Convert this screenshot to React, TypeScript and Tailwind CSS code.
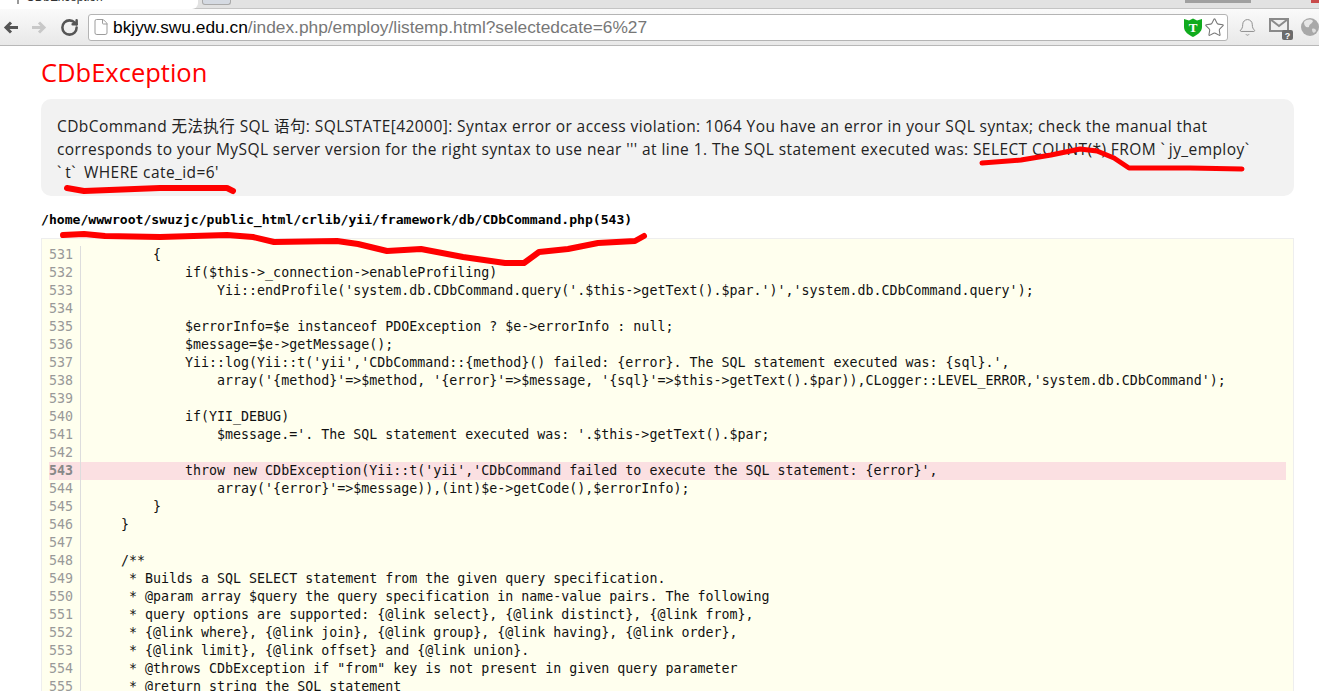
import { Bell, RotateCw, Star, File } from "lucide-react";

const codeLines = [
  [531, "        {"],
  [532, "            if($this->_connection->enableProfiling)"],
  [533, "                Yii::endProfile('system.db.CDbCommand.query('.$this->getText().$par.')','system.db.CDbCommand.query');"],
  [534, ""],
  [535, "            $errorInfo=$e instanceof PDOException ? $e->errorInfo : null;"],
  [536, "            $message=$e->getMessage();"],
  [537, "            Yii::log(Yii::t('yii','CDbCommand::{method}() failed: {error}. The SQL statement executed was: {sql}.',"],
  [538, "                array('{method}'=>$method, '{error}'=>$message, '{sql}'=>$this->getText().$par)),CLogger::LEVEL_ERROR,'system.db.CDbCommand');"],
  [539, ""],
  [540, "            if(YII_DEBUG)"],
  [541, "                $message.='. The SQL statement executed was: '.$this->getText().$par;"],
  [542, ""],
  [543, "            throw new CDbException(Yii::t('yii','CDbCommand failed to execute the SQL statement: {error}',"],
  [544, "                array('{error}'=>$message)),(int)$e->getCode(),$errorInfo);"],
  [545, "        }"],
  [546, "    }"],
  [547, ""],
  [548, "    /**"],
  [549, "     * Builds a SQL SELECT statement from the given query specification."],
  [550, "     * @param array $query the query specification in name-value pairs. The following"],
  [551, "     * query options are supported: {@link select}, {@link distinct}, {@link from},"],
  [552, "     * {@link where}, {@link join}, {@link group}, {@link having}, {@link order},"],
  [553, "     * {@link limit}, {@link offset} and {@link union}."],
  [554, "     * @throws CDbException if \"from\" key is not present in given query parameter"],
  [555, "     * @return string the SQL statement"],
] as const;

// red marker strokes drawn over the page
function Scribbles() {
  return (
    <svg className="absolute left-0 top-0 pointer-events-none" width="1319" height="691" fill="none" stroke="#ff0000" strokeWidth="5" strokeLinecap="round" strokeLinejoin="round">
      <path d="M982 163 L1021 160 L1051 155 L1080 149 L1097 151 L1114 158 L1129 168 L1190 168 L1242 169" />
      <path d="M67 188 L84 191 L160 188 L227 188 L233 191" strokeWidth="6" />
      <path d="M63 235 L84 234 L105 236 L160 237 L227 235 L253 237 L274 242 L337 241 L358 244 L387 251 L421 249 L463 257 L505 263 L524 263 L539 252 L568 249 L598 243 L635 241 L644 236" strokeWidth="6" />
    </svg>
  );
}

function NavArrow({ color, flip }: { color: string; flip?: boolean }) {
  return (
    <svg width="15" height="15" viewBox="0 0 15 15" fill="none" stroke={color} strokeWidth="3" className={flip ? "-scale-x-100" : ""}>
      <path d="M15 7.5H3 M8 2.5L3 7.5L8 12.5" />
    </svg>
  );
}

function Shield() {
  return (
    <svg width="18" height="19" viewBox="0 0 18 19">
      <path d="M0 1 L5 2.5 L9 0.5 L13 2.5 L18 1 V9 C18 14 13 17 9 19 C5 17 0 14 0 9 Z" fill="#10ab1e" />
      <text x="9" y="14" textAnchor="middle" fontSize="13" fontWeight="700" fill="#ffffff" fontFamily="'Liberation Serif', serif">T</text>
    </svg>
  );
}

function MailIcon() {
  return (
    <svg width="24" height="22" viewBox="0 0 24 22">
      <rect x="0" y="0" width="20" height="14" fill="#8a8a8a" />
      <path d="M2 2 H18 V12 H2 Z" fill="#efefef" />
      <path d="M1 1 L10 8 L19 1" fill="none" stroke="#8a8a8a" strokeWidth="2" />
      <rect x="13" y="12" width="11" height="10" rx="2" fill="#6b6b6b" />
      <text x="18.5" y="20.5" textAnchor="middle" fontSize="9" fontWeight="700" fill="#ffffff" fontFamily="'Liberation Sans', sans-serif">?</text>
    </svg>
  );
}

function Globe() {
  return (
    <svg width="18" height="18" viewBox="0 0 18 18" className="shrink-0">
      <circle cx="9" cy="9" r="9" fill="#a8a8a8" />
      <path d="M3 4 C6 1 10 1 12 3 C11 6 8 6 8 9 C5 10 3 8 3 4 Z" fill="#e6e6e6" />
      <path d="M11 11 C13 10 15 11 15 13 C13 16 11 15 11 11 Z" fill="#dddddd" />
    </svg>
  );
}

export default function App() {
  return (
    <div className="relative h-[691px] w-[1319px] overflow-hidden bg-white font-['Open_Sans','Noto_Sans_CJK_SC',sans-serif]">
      <header className="h-[46px] border-b border-[#b8b8b8]">
        <div className="flex h-[9px] bg-[#e2e2e2] border-b border-[#c4c4c4]">
          <div className="h-[9px] w-[198px] overflow-hidden rounded-br-[6px] bg-white">
            <div className="-mt-[10px] flex items-center pl-[17px] text-[12px] leading-[14px] text-[#333]">
              <div className="h-[14px] w-[10px] border border-[#999]" />
              <span className="ml-[7px] font-['Liberation_Sans',sans-serif]">CDbException</span>
              <span className="ml-[95px] text-[#666]">×</span>
            </div>
          </div>
          <div className="ml-[4px] h-[5px] w-[29px] rounded-b-[3px] border border-t-0 border-[#aaa] bg-[#d5dae2]" />
          <div className="ml-auto h-[3px] w-[66px] bg-[#a0a0a0]" />
          <div className="ml-[60px] h-[3px] w-[8px] bg-[#c84a4a]" />
        </div>
        <div className="flex h-[36px] items-center bg-gradient-to-b from-[#fafafa] to-[#e8e8e8] pl-[3px]">
          <NavArrow color="#555555" />
          <div className="ml-[14px]"><NavArrow color="#c8c8c8" flip /></div>
          <RotateCw className="ml-[13px] h-[19px] w-[19px] text-[#555]" strokeWidth={3.2} />
          <div className="ml-[9px] flex h-[27px] w-[1140px] items-center rounded-[3px] border border-[#b4b4b4] bg-white pl-[3px] pr-[2px]">
            <File className="h-[18px] w-[18px] text-[#999]" strokeWidth={1.3} />
            <span className="ml-[3px] font-['Liberation_Sans',sans-serif] text-[17.34px] text-black">
              bkjyw.swu.edu.cn<span className="text-[#777]">/index.php/employ/listemp.html?selectedcate=6%27</span>
            </span>
            <div className="ml-auto flex items-center gap-[2px]">
              <Shield />
              <Star className="h-[21px] w-[21px] text-[#777]" strokeWidth={1.2} />
            </div>
          </div>
          <Bell className="ml-[10px] h-[19px] w-[19px] text-[#8a8a8a]" strokeWidth={1.2} />
          <div className="ml-[12px] mt-[3px]"><MailIcon /></div>
          <div className="ml-[8px]"><Globe /></div>
        </div>
      </header>

      <main className="pl-[41px] pr-[25px]">
        <h1 className="pt-[10px] text-[25.5px] leading-[33px] text-[#ff0000]">CDbException</h1>

        <div className="mt-[10px] h-[97px] rounded-[10px] bg-[#f2f2f2] px-[16px] py-[16px] text-[15.5px] leading-[23px] tracking-[0.42px] text-[#222]">
          CDbCommand 无法执行 SQL 语句: SQLSTATE[42000]: Syntax error or access violation: 1064 You have an error in your SQL syntax; check the manual that corresponds to your MySQL server version for the right syntax to use near ''' at line 1. The SQL statement executed was: SELECT COUNT(*) FROM <span className="tracking-[4px]">`</span>jy_employ<span className="tracking-[4px]">`</span>
          <br />
          <span className="tracking-[4px]">`</span>t<span className="tracking-[4px]">`</span> WHERE cate_id=6'
        </div>

        <p className="mt-[15px] font-['DejaVu_Sans_Mono',monospace] text-[13.1px] font-bold leading-[18px] text-black">
          /home/wwwroot/swuzjc/public_html/crlib/yii/framework/db/CDbCommand.php(543)
        </p>

        <div className="mt-[9px] border border-[#eeeeee] bg-[#ffffee] py-[7px] pl-[7px] pr-[7px] font-['DejaVu_Sans_Mono',monospace] text-[13.3px] leading-[18px] text-[#111]">
          {codeLines.map(([num, text]) => (
            <div key={num} className={num === 543 ? "flex h-[18px] bg-[#fbe0e2]" : "flex h-[18px]"}>
              <span className={num === 543 ? "w-[32px] shrink-0 border-r border-[#ddd] font-bold text-[#888]" : "w-[32px] shrink-0 border-r border-[#ddd] text-[#999]"}>
                {num}
              </span>
              <span className="whitespace-pre pl-[8px]">{text}</span>
            </div>
          ))}
        </div>
      </main>

      <Scribbles />
    </div>
  );
}
